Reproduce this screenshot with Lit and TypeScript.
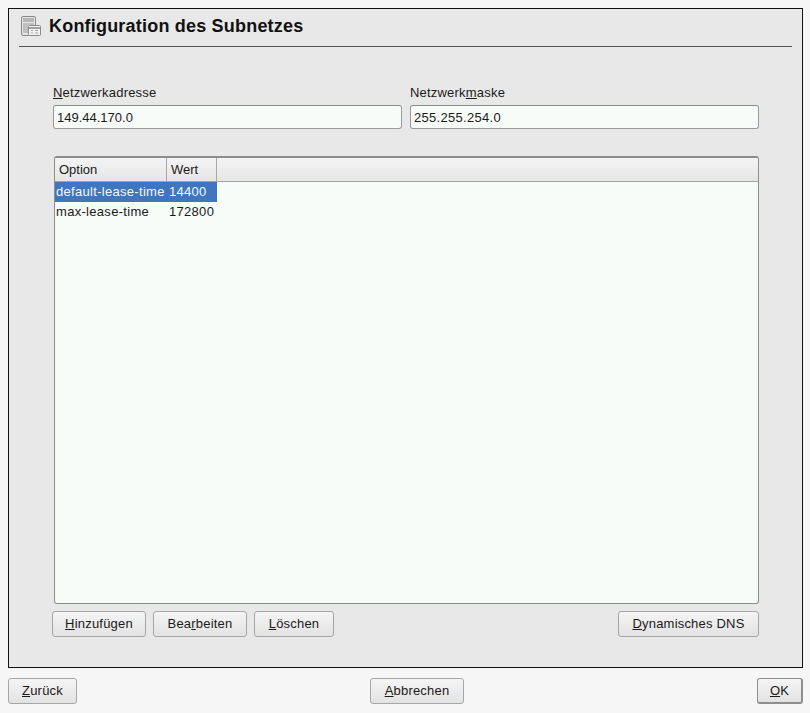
import { LitElement, html, css } from "lit";
import { customElement } from "lit/decorators.js";

@customElement("app-root")
export class AppRoot extends LitElement {
  static styles = css`
    :host {
      display: flex;
      flex-direction: column;
      width: 810px;
      height: 713px;
      box-sizing: border-box;
      background: #f6f6f6;
      font-family: "Liberation Sans", Arial, sans-serif;
      font-size: 13px;
      letter-spacing: 0.2px;
      color: #1a1a1a;
      padding: 8px 7px 10px 8px;
      overflow: hidden;
    }
    u { text-decoration: underline; text-underline-offset: 1px; }
    .panel {
      flex: none;
      height: 660px;
      box-sizing: border-box;
      border: 1px solid #111;
      background: #e8e8e8;
      padding: 0 10px 0 10px;
      display: flex;
      flex-direction: column;
    }
    .head {
      flex: none;
      height: 38px;
      box-sizing: border-box;
      border-bottom: 1px solid #555;
      display: flex;
      align-items: center;
      gap: 8px;
      padding: 0 0 3px 1px;
    }
    .head svg { flex: none; }
    .head h1 {
      margin: 0;
      font-size: 18px;
      font-weight: 700;
      letter-spacing: 0.2px;
      color: #111;
    }
    .body {
      flex: 1;
      display: flex;
      flex-direction: column;
      padding: 37px 33px 0 34px;
      min-height: 0;
    }
    .fields {
      display: grid;
      grid-template-columns: 349px 349px;
      column-gap: 8px;
    }
    .field label { display: block; height: 21px; line-height: 17px; }
    .input {
      height: 24px;
      box-sizing: border-box;
      border: 1px solid #9a9a9a;
      border-top-color: #8a8a8a;
      border-radius: 3px;
      background: #f8fcf9;
      padding: 0 3px;
      line-height: 24px;
      color: #1a1a1a;
      letter-spacing: 0.3px;
    }
    .input.tight { letter-spacing: 0; }
    .table {
      margin: 27px 0 0 1px;
      height: 448px;
      box-sizing: border-box;
      border: 1px solid #8c8c8c;
      border-top-width: 2px;
      border-radius: 3px;
      background: #f8fcf9;
      display: flex;
      flex-direction: column;
      overflow: hidden;
    }
    .thead {
      flex: none;
      height: 24px;
      box-sizing: border-box;
      display: grid;
      grid-template-columns: 112px 50px 1fr;
      background: linear-gradient(#f4f4f4, #e6e6e6);
      border-bottom: 1px solid #a4a4a4;
    }
    .thead div {
      padding-left: 4px;
      line-height: 23px;
      border-right: 1px solid #a8a8a8;
      letter-spacing: 0;
    }
    .thead div:last-child { border-right: none; }
    .row {
      display: grid;
      grid-template-columns: 114px 48px;
      width: 162px;
      height: 20px;
      line-height: 20px;
      letter-spacing: 0.3px;
    }
    .row span:first-child { padding-left: 1px; }
    .row span { white-space: nowrap; }
    .row.sel { background: #3f76bd; color: #f4f8fc; }
    .actions {
      display: flex;
      gap: 7px;
      margin-top: 7px;
      margin-left: -1px;
    }
    .spacer { flex: 1; }
    .btn {
      height: 26px;
      box-sizing: border-box;
      border: 1px solid #a6a6a6;
      border-radius: 3px;
      background: linear-gradient(#f5f5f5, #e2e2e2);
      display: flex;
      align-items: center;
      justify-content: center;
      padding-bottom: 1px;
      color: #1a1a1a;
    }
    .w-add { width: 94px; }
    .w-edit { width: 94px; }
    .w-del { width: 80px; }
    .w-dns { width: 141px; }
    .footer {
      flex: none;
      margin-top: 10px;
      display: flex;
      justify-content: space-between;
      align-items: center;
    }
    .w-back { width: 69px; }
    .w-cancel { width: 94px; }
    .w-ok { width: 46px; border-color: #8e8e8e; border-width: 1px 2px 2px 1px; }
  `;

  render() {
    return html`
      <div class="panel">
        <div class="head">
          <svg width="21" height="21" viewBox="0 0 21 21">
            <rect x="1.5" y="0.5" width="14" height="19" rx="1.5" fill="#e4e4e4" stroke="#8a8a8a"/>
            <rect x="3" y="2" width="11" height="4" fill="#b5b5b5"/>
            <path d="M3 8h11M3 10h5M3 12h5M3 14h5M3 16h5" stroke="#9a9a9a"/>
            <rect x="8.5" y="9.5" width="12" height="10" rx="1" fill="#f2f2f2" stroke="#8a8a8a"/>
            <path d="M9 12h11" stroke="#a0a0a0" stroke-width="2"/>
            <path d="M11 14.5h2M15 14.5h3M11 17h2M15 17h3" stroke="#a8a8a8"/>
          </svg>
          <h1>Konfiguration des Subnetzes</h1>
        </div>
        <div class="body">
          <div class="fields">
            <div class="field">
              <label><u>N</u>etzwerkadresse</label>
              <div class="input tight">149.44.170.0</div>
            </div>
            <div class="field">
              <label>Netzwerk<u>m</u>aske</label>
              <div class="input">255.255.254.0</div>
            </div>
          </div>
          <div class="table">
            <div class="thead">
              <div>Option</div>
              <div>Wert</div>
              <div></div>
            </div>
            <div class="row sel"><span>default-lease-time</span><span>14400</span></div>
            <div class="row"><span>max-lease-time</span><span>172800</span></div>
          </div>
          <div class="actions">
            <div class="btn w-add"><span><u>H</u>inzufügen</span></div>
            <div class="btn w-edit"><span>Bea<u>r</u>beiten</span></div>
            <div class="btn w-del"><span><u>L</u>öschen</span></div>
            <div class="spacer"></div>
            <div class="btn w-dns"><span><u>D</u>ynamisches DNS</span></div>
          </div>
        </div>
      </div>
      <div class="footer">
        <div class="btn w-back"><span><u>Z</u>urück</span></div>
        <div class="btn w-cancel"><span><u>A</u>bbrechen</span></div>
        <div class="btn w-ok"><span><u>O</u>K</span></div>
      </div>
    `;
  }
}
